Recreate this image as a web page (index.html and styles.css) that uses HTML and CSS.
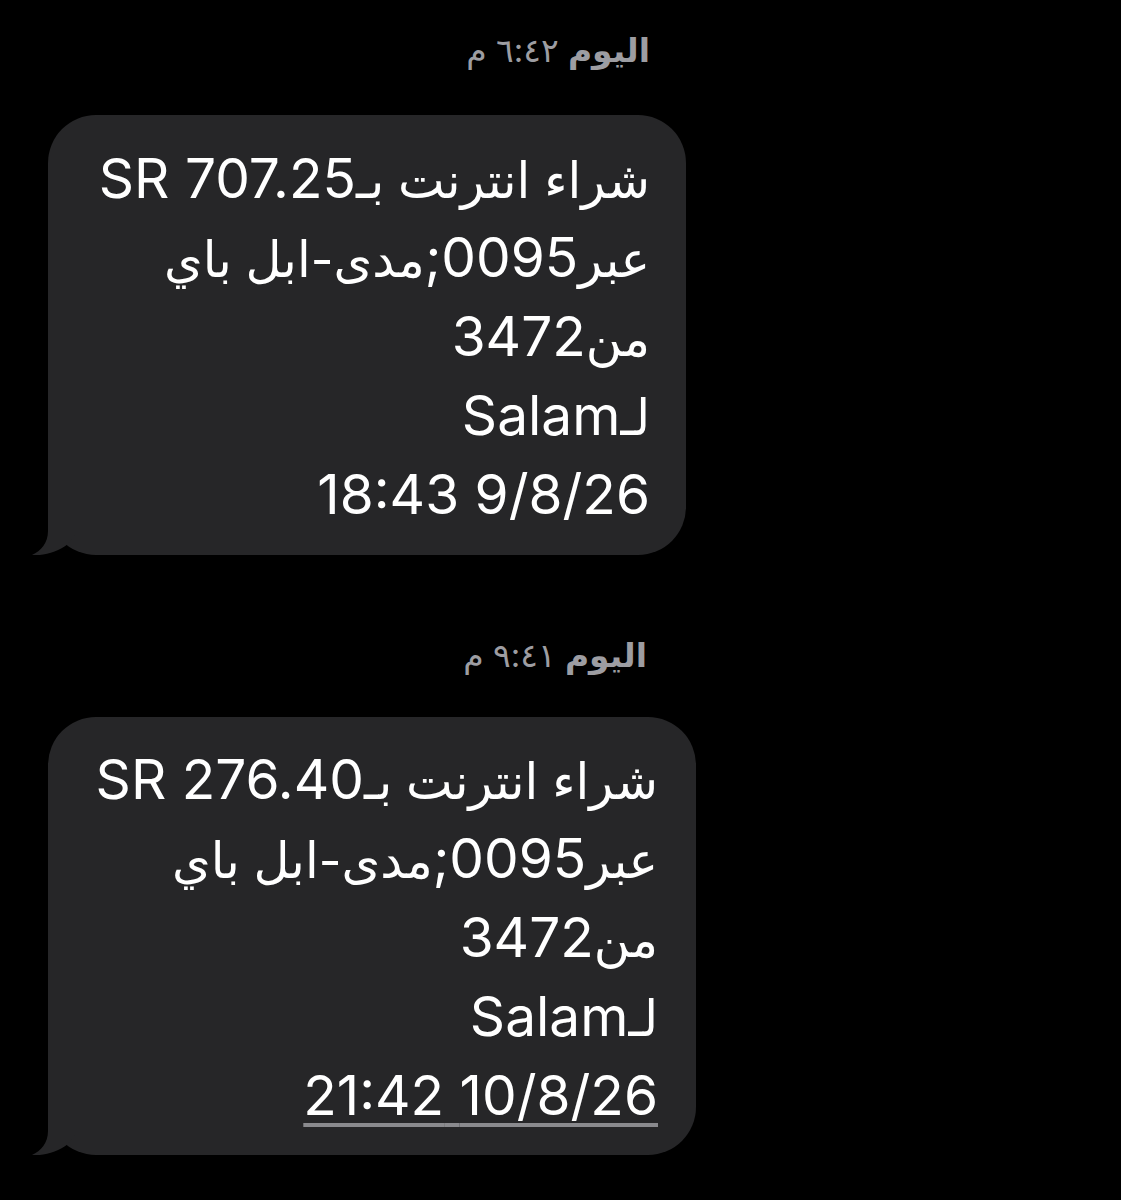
FILE: index.html
```html
<!DOCTYPE html>
<html lang="ar">
<head>
<meta charset="utf-8">
<title>Messages</title>
<link rel="stylesheet" href="styles.css">
</head>
<body>
<main class="thread">
  <section class="group group-one">
    <div class="stamp" dir="rtl"><span class="day">اليوم</span> <span class="time">٦:٤٢ م</span></div>
    <div class="bubble bubble-one" dir="rtl">
      <div class="line"><span class="ar">شراء انترنت بـ</span>SR 707.25</div>
      <div class="line"><span class="ar">عبر</span>0095;<span class="ar">مدى-ابل باي</span></div>
      <div class="line"><span class="ar">من</span>3472</div>
      <div class="line"><span class="ar">لـ</span>Salam</div>
      <div class="line">9/8/26 18:43</div>
      <svg class="tail" width="52" height="50" viewBox="0 0 52 50"><path d="M16 0 L16 26 C16 38 9 46 0 50 C12 51 26 47 36 39 L50 20 L50 0 Z" fill="#262628"/></svg>
    </div>
  </section>
  <section class="group group-two">
    <div class="stamp" dir="rtl"><span class="day">اليوم</span> <span class="time">٩:٤١ م</span></div>
    <div class="bubble bubble-two" dir="rtl">
      <div class="line"><span class="ar">شراء انترنت بـ</span>SR 276.40</div>
      <div class="line"><span class="ar">عبر</span>0095;<span class="ar">مدى-ابل باي</span></div>
      <div class="line"><span class="ar">من</span>3472</div>
      <div class="line"><span class="ar">لـ</span>Salam</div>
      <div class="line"><span class="link">10/8/26 21:42</span></div>
      <svg class="tail" width="52" height="50" viewBox="0 0 52 50"><path d="M16 0 L16 26 C16 38 9 46 0 50 C12 51 26 47 36 39 L50 20 L50 0 Z" fill="#262628"/></svg>
    </div>
  </section>
</main>
</body>
</html>
```
FILE: styles.css
```css
html, body {
  margin: 0;
  padding: 0;
  background: #000;
}
body {
  width: 1121px;
  height: 1200px;
  overflow: hidden;
  font-family: Inter, "DejaVu Sans", sans-serif;
  color: #fff;
}
.thread {
  display: flex;
  flex-direction: column;
  padding-top: 30px;
  padding-left: 48px;
}
.group {
  display: flex;
  flex-direction: column;
}
.group-two {
  margin-top: 80px;
}
.stamp {
  font-size: 33px;
  line-height: 40px;
  color: #9d9da2;
  text-align: right;
}
.group-one .stamp { width: 602px; }
.group-two .stamp { width: 599px; }
.day { font-weight: 600; }
.time { font-weight: 400; }
.bubble {
  position: relative;
  box-sizing: border-box;
  background: #262628;
  border-radius: 48px;
  font-size: 55px;
  text-align: right;
}
.bubble-one {
  margin-top: 45px;
  width: 638px;
  height: 440px;
  padding: 25px 36px 0 0;
  line-height: 77px;
}
.bubble-two {
  margin-top: 42px;
  width: 648px;
  height: 438px;
  padding: 24px 38px 0 0;
  line-height: 77px;
}
.line {
  white-space: nowrap;
}
.ar {
  font-size: 0.9em;
}
.link {
  text-decoration: underline;
  text-decoration-color: #8a8a8e;
  text-decoration-thickness: 4px;
  text-underline-offset: 8px;
  text-decoration-skip-ink: auto;
}
.tail {
  position: absolute;
  left: -16px;
  bottom: 0;
}
```
